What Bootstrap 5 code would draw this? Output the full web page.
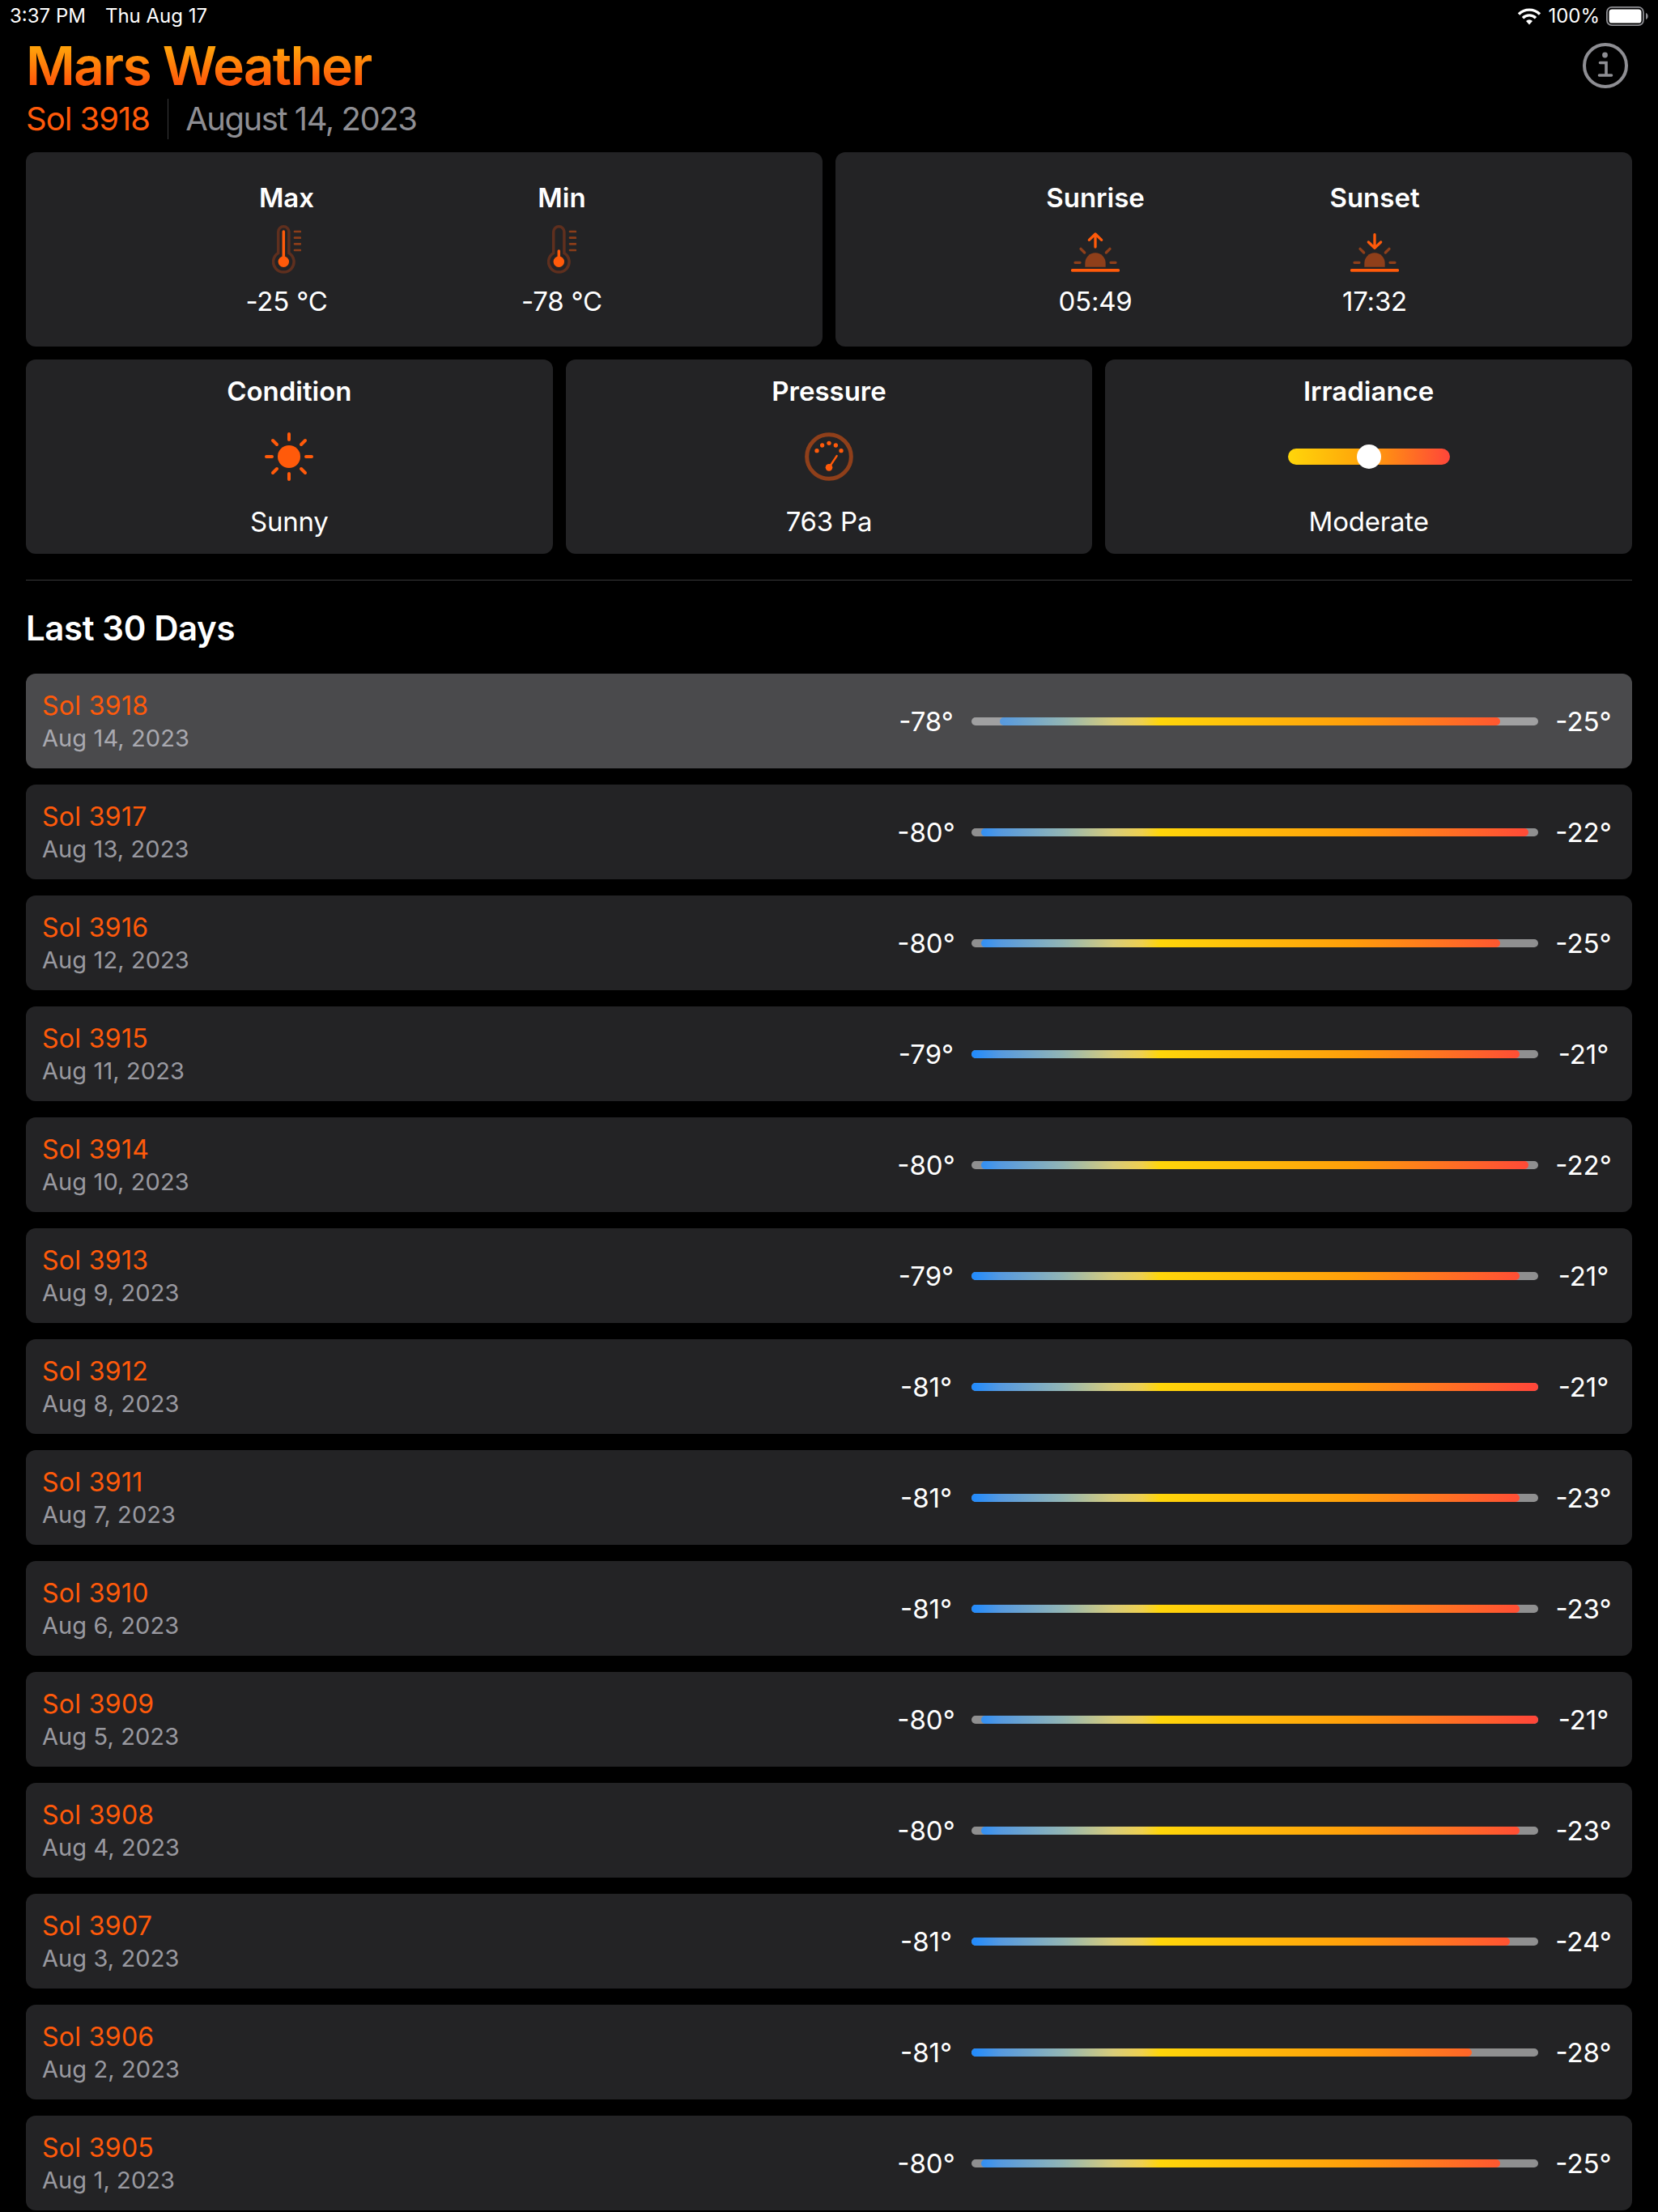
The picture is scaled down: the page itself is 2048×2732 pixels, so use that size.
<!DOCTYPE html>
<html lang="en">
<head>
<meta charset="utf-8">
<title>Mars Weather</title>
<link href="https://cdn.jsdelivr.net/npm/bootstrap@5.3.0/dist/css/bootstrap.min.css" rel="stylesheet">
<style>
:root{--orange:#ff5a0a;--tile:#232325;}
html,body{background:#000;}
body{font-family:"Inter","Liberation Sans",sans-serif;color:#fff;width:2048px;}
.page-wrap{padding:0 32px;}
.status-line{height:40px;margin:0 -20px;font-size:24px;line-height:38px;}
.status-line .stat-right{margin-right:0;}
.title-line{height:82px;}
.app-title{font-size:66px;line-height:82px;font-weight:600;margin:0;letter-spacing:-1.83px;background:linear-gradient(180deg,#ff9f0a 25%,#ff5a0a 75%);-webkit-background-clip:text;background-clip:text;color:transparent;}
.info-ic{margin-right:5px;}
.sub-line{height:50px;margin-bottom:16px;font-size:40px;line-height:50px;}
.sol-big{color:var(--orange);padding-right:22px;letter-spacing:-1px;}
.date-big{color:#8e8e93;padding-left:21px;border-left:1px solid #3a3a3c;letter-spacing:-1.45px;}
.tile{background:var(--tile);border:0;border-radius:12px;height:240px;padding:36px 0;}
.tile.tile-airy{padding:19px 0;}
.tile-h{font-size:33px;line-height:40px;font-weight:600;}
.tile-v{font-size:33px;line-height:40px;letter-spacing:-.2px;}
.tile-ic{height:60px;margin:14px 0;}
.tile-airy .tile-ic{margin:31px 0 30px;}
.pair-a{gap:200px;}
.pair-b{gap:205px;padding-left:3px;}
.pair-item{width:140px;}
.slider-track{position:relative;width:200px;height:20px;border-radius:10px;background:linear-gradient(90deg,#ffd60a,#ff9f0a 50%,#ff453a);}
.slider-thumb{position:absolute;left:85px;top:-5px;width:30px;height:30px;border-radius:50%;background:#fff;}
.rule-line{height:1px;background:#38383a;margin:32px 0 0;}
.sect-title{font-size:42px;line-height:50px;font-weight:600;letter-spacing:-.4px;margin:34px 0 31px;}
.day-list{gap:20px;margin:0;}
.day-row{background:var(--tile);border-radius:12px;height:117px;padding:0 20px;}
.day-row.is-current{background:#4a4a4c;}
.sol-txt{color:var(--orange);font-size:32px;line-height:40px;letter-spacing:.3px;}
.date-txt{color:rgba(235,235,245,.6);font-size:29px;line-height:40px;letter-spacing:.1px;}
.day-left{padding-top:2px;}
.temp{width:80px;font-size:33px;line-height:40px;text-align:center;}
.range-track{width:700px;height:10px;margin:0 16px;border-radius:5px;background:rgba(226,226,226,.564);}
.range-fill{height:10px;border-radius:5px;margin-left:calc(var(--lo) * 700px / 60);width:calc((var(--hi) - var(--lo)) * 700px / 60);background-image:linear-gradient(90deg,#1e8aff,#5599e0 5%,#92b5b5 16%,#d8cc7a 25%,#eed050 30%,#ffd60a 33.3%,#ff9f0a 66.6%,#ff453a);background-size:700px 10px;background-position:calc(var(--lo) * -700px / 60) 0;}
</style>
</head>
<body>
<div class="page-wrap">
  <div class="status-line d-flex justify-content-between align-items-center">
    <div class="d-flex gap-4"><span>3:37 PM</span><span>Thu Aug 17</span></div>
    <div class="stat-right d-flex align-items-center">
      <svg width="30" height="22" viewBox="0 0 30 22" class="me-2"><g fill="none" stroke="#fff" stroke-width="3.4"><path d="M2 8.5a18.5 18.5 0 0 1 26 0"/><path d="M7 13.2a11.4 11.4 0 0 1 16 0"/></g><path d="M11 17a5.7 5.7 0 0 1 8 0l-4 4.6z" fill="#fff"/></svg>
      <span>100%</span>
      <svg width="52" height="24" viewBox="0 0 52 24" class="ms-2"><rect x=".9" y=".9" width="45" height="22.2" rx="6" fill="none" stroke="#8e8e93" stroke-width="1.8"/><rect x="3.5" y="3.5" width="40" height="17" rx="3.6" fill="#fff"/><path d="M49 8c1.6.4 2.6 2 2.6 4s-1 3.600-2.600 4z" fill="#8e8e93"/></svg>
    </div>
  </div>
  <div class="title-line d-flex justify-content-between align-items-center">
    <h1 class="app-title">Mars Weather</h1>
    <svg class="info-ic" width="56" height="56" viewBox="0 0 56 56"><circle cx="28" cy="28" r="26" fill="none" stroke="#8e8e93" stroke-width="4"/><circle cx="27.500" cy="15" r="3.400" fill="#8e8e93"/><path d="M21.500 24.500h7.500v15.500M20.500 40h15" fill="none" stroke="#8e8e93" stroke-width="3.600" stroke-linecap="round"/></svg>
  </div>
  <div class="sub-line d-flex"><span class="sol-big">Sol 3918</span><span class="date-big">August 14, 2023</span></div>

  <div class="row g-3">
    <div class="col-6">
      <div class="card tile text-center">
        <div class="d-flex justify-content-center pair-a">
          <div class="pair-item">
            <div class="tile-h">Max</div>
            <div class="tile-ic">
              <svg width="36" height="60" viewBox="0 0 36 60"><path d="M7.700 8.350a6.600 6.600 0 0 1 13.200 0V34.400A12.750 12.750 0 1 1 7.700 34.400Z" fill="none" stroke="#5f2f1e" stroke-width="3.500"/><path d="M14.300 8V45" stroke="#ff5a0a" stroke-width="3.500" stroke-linecap="round"/><circle cx="14.300" cy="45.300" r="6.700" fill="#ff5a0a"/><path d="M28 8h7M28 15.700h7M28 23.300h7M28 31h7" stroke="#8a3d19" stroke-width="2.700" stroke-linecap="round"/></svg>
            </div>
            <div class="tile-v">-25 °C</div>
          </div>
          <div class="pair-item">
            <div class="tile-h">Min</div>
            <div class="tile-ic">
              <svg width="36" height="60" viewBox="0 0 36 60"><path d="M7.700 8.350a6.600 6.600 0 0 1 13.200 0V34.400A12.750 12.750 0 1 1 7.700 34.400Z" fill="none" stroke="#5f2f1e" stroke-width="3.500"/><path d="M14.300 32V45" stroke="#ff5a0a" stroke-width="3.500" stroke-linecap="round"/><circle cx="14.300" cy="45.300" r="6.700" fill="#ff5a0a"/><path d="M28 8h7M28 15.700h7M28 23.300h7M28 31h7" stroke="#8a3d19" stroke-width="2.700" stroke-linecap="round"/></svg>
            </div>
            <div class="tile-v">-78 °C</div>
          </div>
        </div>
      </div>
    </div>
    <div class="col-6">
      <div class="card tile text-center">
        <div class="d-flex justify-content-center pair-b">
          <div class="pair-item">
            <div class="tile-h">Sunrise</div>
            <div class="tile-ic">
              <svg width="60" height="60" viewBox="132 45 180 180"><path d="M184 200V186a38 38 0 0 1 76 0V200Z" fill="#8f3f1a"/><path d="M147 184h18M279 184h18M168 133l14 14M276 133l-14 14" stroke="#8f3f1a" stroke-width="10" stroke-linecap="round"/><path d="M137 212.500H307" stroke="#ff5a0a" stroke-width="11" stroke-linecap="round"/><path d="M222 126V80M199 100l23-22 23 22" fill="none" stroke="#ff5a0a" stroke-width="10" stroke-linecap="round" stroke-linejoin="round"/></svg>
            </div>
            <div class="tile-v">05:49</div>
          </div>
          <div class="pair-item">
            <div class="tile-h">Sunset</div>
            <div class="tile-ic">
              <svg width="60" height="60" viewBox="132 45 180 180"><path d="M184 200V186a38 38 0 0 1 76 0V200Z" fill="#8f3f1a"/><path d="M147 184h18M279 184h18M168 133l14 14M276 133l-14 14" stroke="#8f3f1a" stroke-width="10" stroke-linecap="round"/><path d="M137 212.500H307" stroke="#ff5a0a" stroke-width="11" stroke-linecap="round"/><path d="M222 80V128M199 108l23 22 23-22" fill="none" stroke="#ff5a0a" stroke-width="10" stroke-linecap="round" stroke-linejoin="round"/></svg>
            </div>
            <div class="tile-v">17:32</div>
          </div>
        </div>
      </div>
    </div>
    <div class="col-4">
      <div class="card tile tile-airy text-center">
        <div class="tile-h">Condition</div>
        <div class="tile-ic">
          <svg width="60" height="60" viewBox="-30 -30 60 60"><circle r="14" fill="#ff5a0a"/><g stroke="#ff5a0a" stroke-width="4" stroke-linecap="round"><path d="M0-28V-21M0 28V21M-28 0H-21M28 0H21M-20-20L-15-15M20-20L15-15M-20 20L-15 15M20 20L15 15"/></g></svg>
        </div>
        <div class="tile-v">Sunny</div>
      </div>
    </div>
    <div class="col-4">
      <div class="card tile tile-airy text-center">
        <div class="tile-h">Pressure</div>
        <div class="tile-ic">
          <svg width="60" height="60" viewBox="42 42 180 180"><circle cx="132" cy="132" r="82" fill="none" stroke="#8f3f1a" stroke-width="15"/><g fill="#ff5a0a"><circle cx="87" cy="110" r="8"/><circle cx="107" cy="90" r="8"/><circle cx="132" cy="82" r="8"/><circle cx="157" cy="90" r="8"/><circle cx="177" cy="110" r="8"/><circle cx="132" cy="172" r="13"/></g><path d="M135 168L161 129" stroke="#ff5a0a" stroke-width="7" stroke-linecap="round"/></svg>
        </div>
        <div class="tile-v">763 Pa</div>
      </div>
    </div>
    <div class="col-4">
      <div class="card tile tile-airy text-center">
        <div class="tile-h">Irradiance</div>
        <div class="tile-ic d-flex justify-content-center align-items-center">
          <div class="slider-track"><div class="slider-thumb"></div></div>
        </div>
        <div class="tile-v">Moderate</div>
      </div>
    </div>
  </div>

  <div class="rule-line"></div>
  <h2 class="sect-title">Last 30 Days</h2>

  <ul class="day-list list-unstyled d-flex flex-column">
    <li class="day-row is-current d-flex align-items-center"><div class="day-left flex-grow-1"><div class="sol-txt">Sol 3918</div><div class="date-txt">Aug 14, 2023</div></div><div class="temp">-78°</div><div class="range-track"><div class="range-fill" style="--lo:3;--hi:56"></div></div><div class="temp">-25°</div></li>
    <li class="day-row d-flex align-items-center"><div class="day-left flex-grow-1"><div class="sol-txt">Sol 3917</div><div class="date-txt">Aug 13, 2023</div></div><div class="temp">-80°</div><div class="range-track"><div class="range-fill" style="--lo:1;--hi:59"></div></div><div class="temp">-22°</div></li>
    <li class="day-row d-flex align-items-center"><div class="day-left flex-grow-1"><div class="sol-txt">Sol 3916</div><div class="date-txt">Aug 12, 2023</div></div><div class="temp">-80°</div><div class="range-track"><div class="range-fill" style="--lo:1;--hi:56"></div></div><div class="temp">-25°</div></li>
    <li class="day-row d-flex align-items-center"><div class="day-left flex-grow-1"><div class="sol-txt">Sol 3915</div><div class="date-txt">Aug 11, 2023</div></div><div class="temp">-79°</div><div class="range-track"><div class="range-fill" style="--lo:0;--hi:58"></div></div><div class="temp">-21°</div></li>
    <li class="day-row d-flex align-items-center"><div class="day-left flex-grow-1"><div class="sol-txt">Sol 3914</div><div class="date-txt">Aug 10, 2023</div></div><div class="temp">-80°</div><div class="range-track"><div class="range-fill" style="--lo:1;--hi:59"></div></div><div class="temp">-22°</div></li>
    <li class="day-row d-flex align-items-center"><div class="day-left flex-grow-1"><div class="sol-txt">Sol 3913</div><div class="date-txt">Aug 9, 2023</div></div><div class="temp">-79°</div><div class="range-track"><div class="range-fill" style="--lo:0;--hi:58"></div></div><div class="temp">-21°</div></li>
    <li class="day-row d-flex align-items-center"><div class="day-left flex-grow-1"><div class="sol-txt">Sol 3912</div><div class="date-txt">Aug 8, 2023</div></div><div class="temp">-81°</div><div class="range-track"><div class="range-fill" style="--lo:0;--hi:60"></div></div><div class="temp">-21°</div></li>
    <li class="day-row d-flex align-items-center"><div class="day-left flex-grow-1"><div class="sol-txt">Sol 3911</div><div class="date-txt">Aug 7, 2023</div></div><div class="temp">-81°</div><div class="range-track"><div class="range-fill" style="--lo:0;--hi:58"></div></div><div class="temp">-23°</div></li>
    <li class="day-row d-flex align-items-center"><div class="day-left flex-grow-1"><div class="sol-txt">Sol 3910</div><div class="date-txt">Aug 6, 2023</div></div><div class="temp">-81°</div><div class="range-track"><div class="range-fill" style="--lo:0;--hi:58"></div></div><div class="temp">-23°</div></li>
    <li class="day-row d-flex align-items-center"><div class="day-left flex-grow-1"><div class="sol-txt">Sol 3909</div><div class="date-txt">Aug 5, 2023</div></div><div class="temp">-80°</div><div class="range-track"><div class="range-fill" style="--lo:1;--hi:60"></div></div><div class="temp">-21°</div></li>
    <li class="day-row d-flex align-items-center"><div class="day-left flex-grow-1"><div class="sol-txt">Sol 3908</div><div class="date-txt">Aug 4, 2023</div></div><div class="temp">-80°</div><div class="range-track"><div class="range-fill" style="--lo:1;--hi:58"></div></div><div class="temp">-23°</div></li>
    <li class="day-row d-flex align-items-center"><div class="day-left flex-grow-1"><div class="sol-txt">Sol 3907</div><div class="date-txt">Aug 3, 2023</div></div><div class="temp">-81°</div><div class="range-track"><div class="range-fill" style="--lo:0;--hi:57"></div></div><div class="temp">-24°</div></li>
    <li class="day-row d-flex align-items-center"><div class="day-left flex-grow-1"><div class="sol-txt">Sol 3906</div><div class="date-txt">Aug 2, 2023</div></div><div class="temp">-81°</div><div class="range-track"><div class="range-fill" style="--lo:0;--hi:53"></div></div><div class="temp">-28°</div></li>
    <li class="day-row d-flex align-items-center"><div class="day-left flex-grow-1"><div class="sol-txt">Sol 3905</div><div class="date-txt">Aug 1, 2023</div></div><div class="temp">-80°</div><div class="range-track"><div class="range-fill" style="--lo:1;--hi:56"></div></div><div class="temp">-25°</div></li>
  </ul>
</div>
<script src="https://cdn.jsdelivr.net/npm/bootstrap@5.3.0/dist/js/bootstrap.bundle.min.js"></script>
</body>
</html>
